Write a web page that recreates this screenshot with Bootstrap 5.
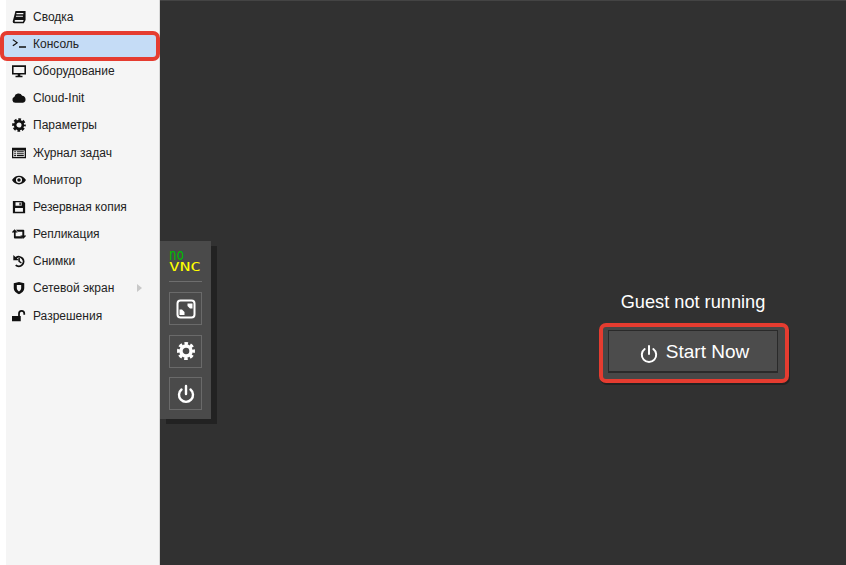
<!DOCTYPE html>
<html lang="ru"><head><meta charset="utf-8">
<link href="https://cdn.jsdelivr.net/npm/bootstrap@5.3.0/dist/css/bootstrap.min.css" rel="stylesheet">
<style>
html,body{height:100%;margin:0;overflow:hidden}
body{background:#313131;font-family:"Liberation Sans",Arial,sans-serif}
.shell{height:565px;width:846px}
.side{width:160px;flex:none;background:#f5f5f5;border-left:6px solid #fff;border-right:1px solid #d8d8d8;padding-top:3.5px;font-size:12px;color:#222}
.item{height:27.2px;padding-left:6px;padding-bottom:1px;gap:7px;color:#222;position:relative}
.item svg{width:14px;height:14px;flex:none;fill:#111}
.item.on::before{content:"";position:absolute;left:-2px;top:3px;right:3px;bottom:0;background:#c5dcf6;border-radius:2px;z-index:0}
.item.on>*{position:relative;z-index:1}
.item .lbl{position:relative;z-index:1}
.item.on::after{content:"";position:absolute;left:-6px;top:0;right:-1px;bottom:-3px;border:4px solid #e53c30;border-radius:7px;z-index:2}
.item .arr{position:absolute;left:131px;top:9px;border-left:5px solid #c8c8c8;border-top:4px solid transparent;border-bottom:4px solid transparent}
.stage{background:#313131;border-top:1px solid #444}
.vncbar{position:absolute;left:160px;top:241px;width:51px;height:178px;background:#4a4a4a;box-shadow:6px 5px 0 #222;padding:10px 9px 0}
.logo{height:31px;border-bottom:1px solid #6e6e6e;margin-bottom:10px;overflow:visible}
.logo span{display:block;height:10px;font-family:"DejaVu Sans Mono",monospace;transform-origin:0 50%;white-space:nowrap}
.logo .n1{color:#0b0;font-size:15px;line-height:9px;transform:scaleX(.84)}
.logo .n2{color:#ff0;font-size:13px;line-height:12px;transform:scaleX(1.36)}
.vbtn{width:33px;height:33px;border:1px solid #6a6a6a;margin-bottom:9.5px}
.vbtn svg{width:22px;height:22px}
.guest{position:absolute;left:600px;top:291px;width:186px;text-align:center;color:#fff;font-size:18.2px;line-height:22px}
.start{position:absolute;left:599px;top:323px;width:190px;height:60px;border:4px solid #e53c30;border-radius:7px;background:#474747;padding:3px 5px;box-shadow:1px 2px 0 #222}
.start-in{height:43px;background:#4c4c4c;border:1px solid #2a2a2a;border-bottom-width:2px;color:#fff;font-size:19px;gap:8px;width:170px;padding-left:3px;padding-top:2px}
.start-in svg{width:18px;height:20px;margin-top:3px}
</style></head><body>
<svg width="0" height="0" class="position-absolute"><defs>
<g id="cog"><circle cx="8" cy="8" r="4.4" fill="none" stroke-width="3"/><circle cx="8" cy="8" r="6.300" fill="none" stroke-width="3" stroke-dasharray="2.950 2" stroke-dashoffset="1.500"/></g>
</defs></svg>
<div class="shell d-flex">
<nav class="side">
<div class="item d-flex align-items-center"><svg viewBox="0 0 16 16"><path fill-rule="evenodd" d="M4 1h11.500v10.500L13.500 15H2.500A2 2 0 0 1 .8 13zM5 3.500v1.300h8V3.500zM4.500 6.500v1.300h8V6.500zM3 12.500a1 1 0 0 0 1 1h8.500l.8-2H4a1 1 0 0 0-1 1z"/></svg><span class="lbl">Сводка</span></div>
<div class="item on d-flex align-items-center"><svg viewBox="0 0 16 16"><path d="M.5 3.500 1.500 2.500 7 6.500 1.500 10.500.5 9.500 4.800 6.500zM8 10.700H16V12.200H8z"/></svg><span class="lbl">Консоль</span></div>
<div class="item d-flex align-items-center"><svg viewBox="0 0 16 16"><path fill-rule="evenodd" d="M0 1.500h16V12H9.500v1.500H12V15H4v-1.500h2.500V12H0zM1.800 3.300V10.200h12.400V3.300z"/></svg><span class="lbl">Оборудование</span></div>
<div class="item d-flex align-items-center"><svg viewBox="0 0 16 16"><path d="M3.800 13.500A3.500 3.500 0 0 1 2.800 6.700 4.700 4.700 0 0 1 11.600 5.300 4.200 4.200 0 0 1 12.500 13.500z"/></svg><span class="lbl">Cloud-Init</span></div>
<div class="item d-flex align-items-center"><svg viewBox="0 0 16 16" stroke="#111"><use href="#cog"/></svg><span class="lbl">Параметры</span></div>
<div class="item d-flex align-items-center"><svg viewBox="0 0 16 16"><path fill-rule="evenodd" d="M0 2h16v12H0zM1.500 5v7.500h13V5zM2.500 6h2v1.200h-2zM5.500 6h8v1.200h-8zM2.500 8.200h2v1.200h-2zM5.500 8.200h8v1.200h-8zM2.500 10.400h2v1.200h-2zM5.500 10.400h8v1.200h-8z"/></svg><span class="lbl">Журнал задач</span></div>
<div class="item d-flex align-items-center"><svg viewBox="0 0 16 16"><path fill-rule="evenodd" d="M0 8c2-3.300 4.800-5 8-5s6 1.700 8 5c-2 3.300-4.800 5-8 5s-6-1.700-8-5zm8-3.500a3.500 3.500 0 1 0 0 7 3.500 3.500 0 0 0 0-7zM8 6a2 2 0 1 1-2 2c0-1 1-2 2-2z"/></svg><span class="lbl">Монитор</span></div>
<div class="item d-flex align-items-center"><svg viewBox="0 0 16 16"><path fill-rule="evenodd" d="M1 1h11.500L15 3.500V15H1zM4 2.500V6.500h7V2.500zM8.500 3h1.500v3H8.500zM3.500 9v4.500h9V9z"/></svg><span class="lbl">Резервная копия</span></div>
<div class="item d-flex align-items-center"><svg viewBox="0 0 16 16"><path d="M3 2.500 6.500 6.200H4.200V10.500h6L12.500 13H3.200a1 1 0 0 1-1-1V6.200H-.5zM4.500 3H13a1 1 0 0 1 1 1V9.800h2.500L13 13.500 9.500 9.800h2.300V5.500H6.500z"/></svg><span class="lbl">Репликация</span></div>
<div class="item d-flex align-items-center"><svg viewBox="0 0 16 16"><path d="M1.500 1 4 3.300A6.500 6.500 0 1 1 3.500 13.500L5 12A4.400 4.400 0 1 0 5.500 4.800L8 7H1.500zM7.300 4.500H9V8l2.200 1.600-.9 1.300L7.300 8.800z"/></svg><span class="lbl">Снимки</span></div>
<div class="item d-flex align-items-center"><svg viewBox="0 0 16 16"><path fill-rule="evenodd" d="M2 2.500 8 1l6 1.500V8c0 3.500-3 6-6 7-3-1-6-3.500-6-7zM5.500 4.500V8c0 1.500 1 3 2.500 4 1.500-1 2.500-2.500 2.500-4V4.500z"/></svg><span class="lbl">Сетевой экран</span><span class="arr"></span></div>
<div class="item d-flex align-items-center"><svg viewBox="0 0 16 16"><path d="M0 8h10v6H0zM7 8V5a4 4 0 0 1 8 0v1.500h-2V5a2 2 0 0 0-4 0v3z"/></svg><span class="lbl">Разрешения</span></div>
</nav>
<main class="stage flex-grow-1"></main>
</div>
<div class="vncbar">
<div class="logo"><span class="n1">no</span><span class="n2">VNC</span></div>
<div class="vbtn d-flex align-items-center justify-content-center"><svg viewBox="0 0 22 22" fill="none"><rect x="2.500" y="2.500" width="17" height="17" rx="3" stroke="#fff" stroke-width="2"/><path d="M12.500 5.500h5v5h-2.500l-2.500-2.500zM4.500 11.500h2.500l2.500 2.500v3h-5z" fill="#fff"/></svg></div>
<div class="vbtn d-flex align-items-center justify-content-center"><svg viewBox="0 0 22 22" stroke="#fff"><use href="#cog" transform="translate(1.800 1.800) scale(1.150)"/></svg></div>
<div class="vbtn d-flex align-items-center justify-content-center"><svg viewBox="0 0 22 22" fill="none" stroke="#fff" stroke-width="2.400" stroke-linecap="round"><path d="M11 3v8M6.500 6.500a7 7 0 1 0 9 0"/></svg></div>
</div>
<div class="guest">Guest not running</div>
<div class="start"><div class="start-in d-flex align-items-center justify-content-center"><svg viewBox="0 0 20 22" fill="none" stroke="#fff" stroke-width="2.200" stroke-linecap="round"><path d="M10 2v9M5.200 5.500a8 8 0 1 0 9.600 0"/></svg>Start Now</div></div>
<script src="https://cdn.jsdelivr.net/npm/bootstrap@5.3.0/dist/js/bootstrap.bundle.min.js"></script>
</body></html>
